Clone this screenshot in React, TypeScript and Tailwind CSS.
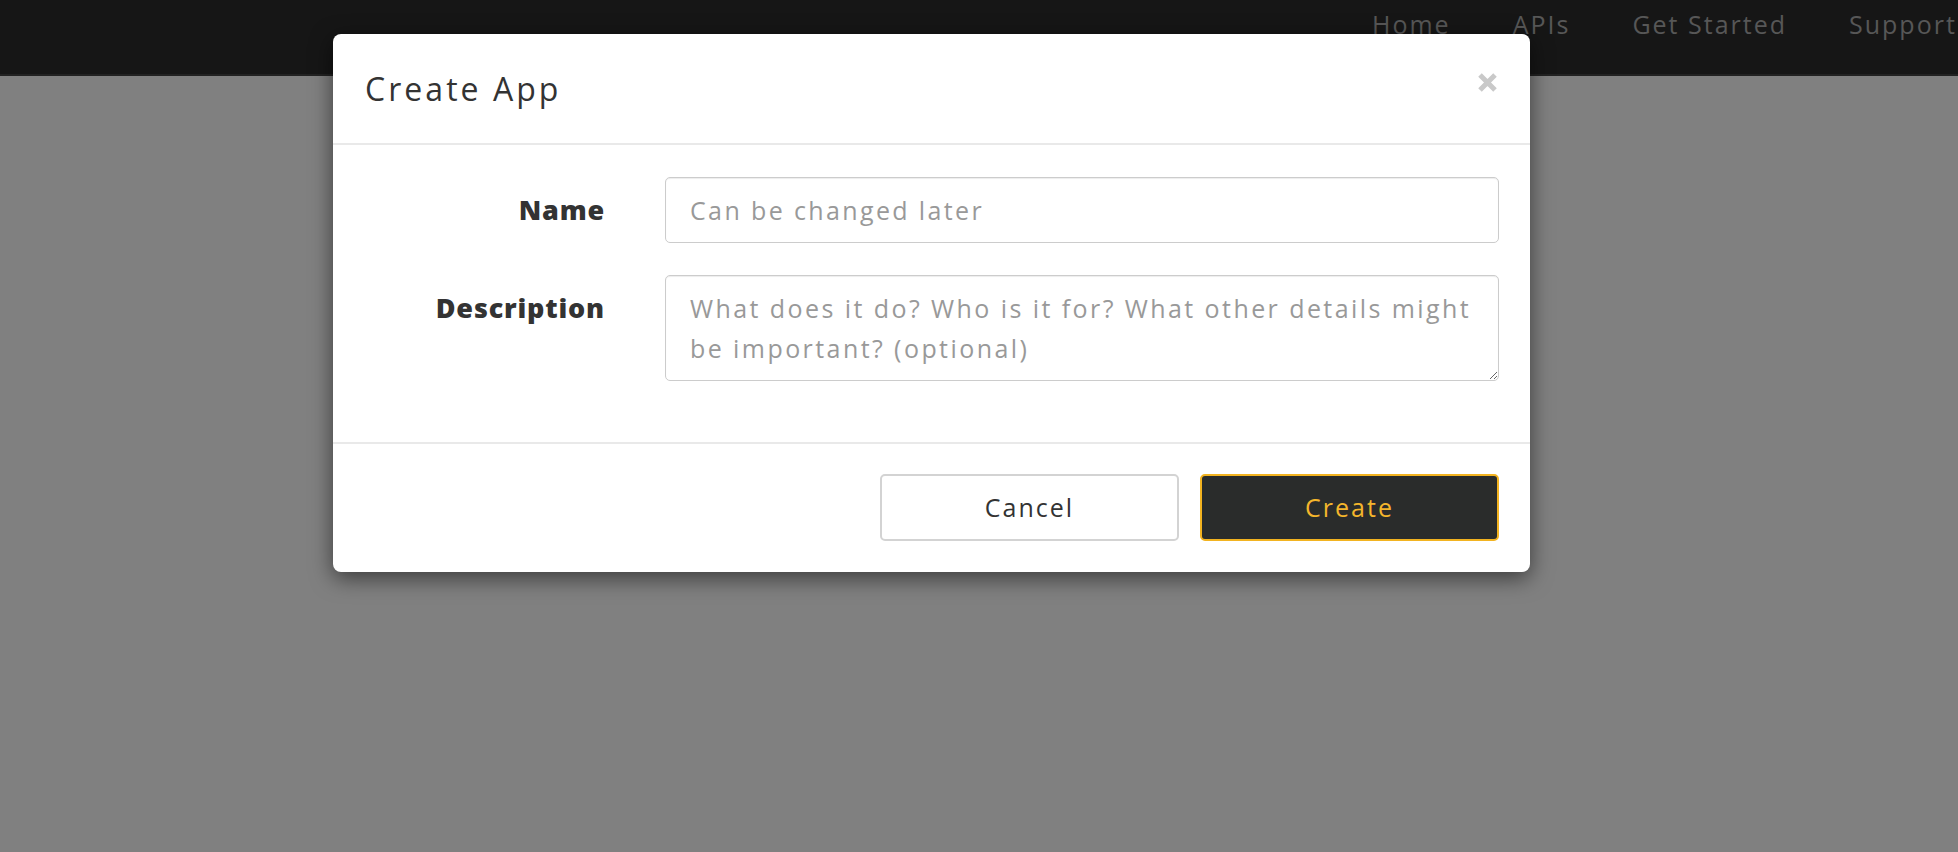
import React from "react";

const navItems = ["Home", "APIs", "Get Started", "Support"];

function CloseIcon() {
  return (
    <svg width="21" height="21" viewBox="0 0 21 21" aria-hidden="true">
      <path d="M3 3 L18 18 M18 3 L3 18" stroke="#c9c9c9" strokeWidth="5" strokeLinecap="butt" />
    </svg>
  );
}

export default function App() {
  return (
    <div className="relative h-[852px] w-full overflow-hidden bg-[#808080] font-['Open_Sans',sans-serif]">
      {/* Navbar (behind the backdrop) */}
      <header className="h-[76px] border-b-2 border-[#222222] bg-[#161616]">
        <nav className="flex gap-[62px] overflow-hidden whitespace-nowrap pl-[1372px] pt-[6px] text-[25px] tracking-[0.08em] text-[#575757]">
          {navItems.map((item) => (
            <span key={item}>{item}</span>
          ))}
        </nav>
      </header>

      {/* Create App modal */}
      <div
        role="dialog"
        className="absolute left-[333px] top-[34px] w-[1197px] rounded-[8px] bg-white shadow-[0_6px_22px_rgba(0,0,0,0.55)]"
      >
        <div className="relative flex h-[111px] items-center border-b-2 border-[#e9e9e9] pl-[32px] pr-[31px]">
          <h4 className="text-[32px] font-normal tracking-[0.095em] text-[#333333]">Create App</h4>
          <button className="absolute right-[32px] top-[38px]" aria-label="Close">
            <CloseIcon />
          </button>
        </div>

        <div className="flex flex-col gap-[32px] pb-[61px] pl-[32px] pr-[31px] pt-[32px]">
          <div className="flex">
            <label className="-mr-[1px] w-[240px] shrink-0 pt-[13px] text-right text-[27px] font-extrabold leading-[40px] tracking-[0.03em] text-[#333333]">
              Name
            </label>
            <div className="ml-[61px] flex-1">
              <input
                type="text"
                placeholder="Can be changed later"
                className="h-[66px] w-full rounded-[5px] border border-[#cccccc] px-[24px] text-[25px] tracking-[0.095em] text-[#333333] shadow-[inset_0_1px_1px_rgba(0,0,0,0.075)] outline-none placeholder:text-[#999999]"
              />
            </div>
          </div>
          <div className="flex">
            <label className="-mr-[1px] w-[240px] shrink-0 pt-[13px] text-right text-[27px] font-extrabold leading-[40px] tracking-[0.03em] text-[#333333]">
              Description
            </label>
            <div className="ml-[61px] flex-1">
              <textarea
                placeholder={"What does it do? Who is it for? What other details might\nbe important? (optional)"}
                className="block h-[106px] w-full resize-y rounded-[5px] border border-[#cccccc] py-[12px] pl-[24px] pr-[4px] text-[25px] leading-[40px] tracking-[0.097em] text-[#333333] shadow-[inset_0_1px_1px_rgba(0,0,0,0.075)] outline-none placeholder:text-[#999999]"
              />
            </div>
          </div>
        </div>

        <div className="flex justify-end gap-[21px] border-t-2 border-[#e9e9e9] pb-[31px] pl-[32px] pr-[31px] pt-[30px]">
          <button className="h-[67px] w-[299px] rounded-[5px] border-2 border-[#d3d3d3] bg-white text-[25px] tracking-[0.08em] text-[#333333]">
            Cancel
          </button>
          <button className="h-[67px] w-[299px] rounded-[5px] border-2 border-[#f2b320] bg-[#2a2c2b] text-[25px] tracking-[0.08em] text-[#f4b62c]">
            Create
          </button>
        </div>
      </div>
    </div>
  );
}
